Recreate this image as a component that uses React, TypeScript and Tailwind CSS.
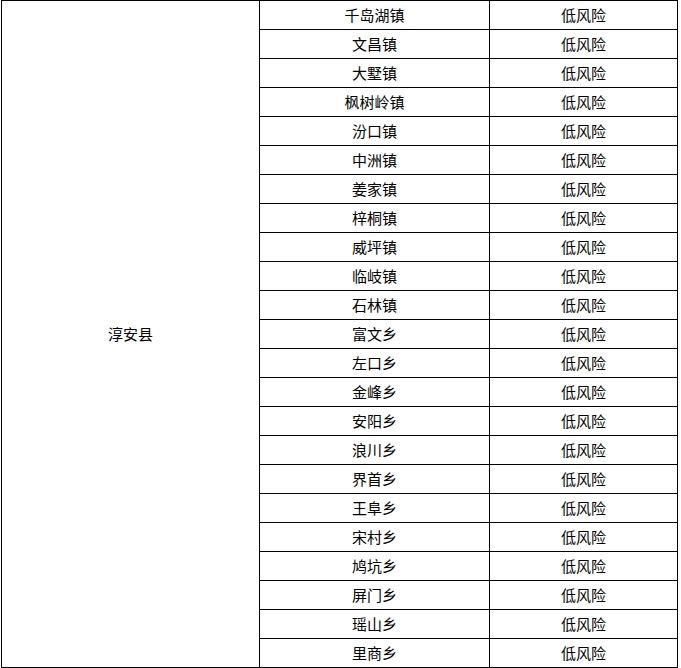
import React from 'react';

const towns = [
    '千岛湖镇', '文昌镇', '大墅镇', '枫树岭镇', '汾口镇', '中洲镇', '姜家镇', '梓桐镇',
    '威坪镇', '临岐镇', '石林镇', '富文乡', '左口乡', '金峰乡', '安阳乡', '浪川乡',
    '界首乡', '王阜乡', '宋村乡', '鸠坑乡', '屏门乡', '瑶山乡', '里商乡',
];

export default function App() {
    return (
        <div className="bg-white w-[681px] h-[668px] text-black text-[15px] leading-none font-['Noto_Sans_CJK_SC','Noto_Sans',sans-serif]">
            <div className="ml-px flex w-[677px] border-t border-l border-black">
                <div className="w-[258px] border-r border-b border-black flex items-center justify-center pb-px">
                    淳安县
                </div>
                <div className="flex flex-col">
                    {towns.map(town => (
                        <div key={town} className="flex h-[29px]">
                            <div className="w-[230px] border-r border-b border-black flex items-center justify-center pb-px">{town}</div>
                            <div className="w-[188px] border-r border-b border-black flex items-center justify-center pb-px">低风险</div>
                        </div>
                    ))}
                </div>
            </div>
        </div>
    );
}
